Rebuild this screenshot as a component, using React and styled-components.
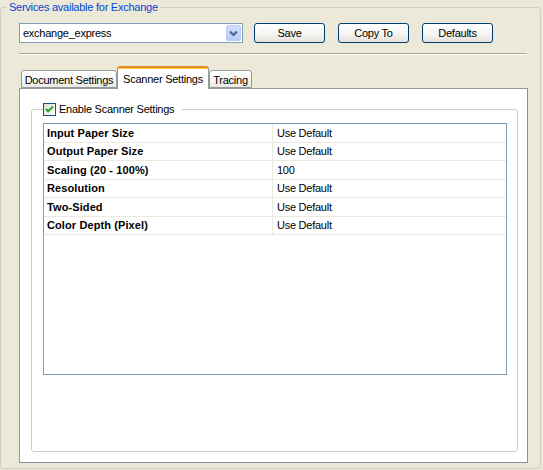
import { Fragment } from "react";
import styled, { createGlobalStyle } from "styled-components";

const GlobalStyle = createGlobalStyle`
	html, body {
		margin: 0;
		padding: 0;
		background: #ece9d8;
	}
	body {
		font-family: "Liberation Sans", Arial, sans-serif;
		font-size: 11px;
		letter-spacing: -0.25px;
		color: #000;
	}
`;

const Window = styled.div`
	width: 543px;
	height: 470px;
	overflow: hidden;
	background: #ece9d8;
`;

const GroupBox = styled.fieldset`
	box-sizing: border-box;
	margin: 0;
	width: 541px;
	height: 469px;
	padding: 9px 6px 0 6px;
	border: 1px solid #d0d0bf;
	border-radius: 3px;
`;

const GroupTitle = styled.legend`
	padding: 0 2px;
	line-height: 14px;
	color: #0046d5;
`;

const Body = styled.div`
	padding-left: 12px;
	display: flex;
	flex-direction: column;
`;

const Toolbar = styled.div`
	display: flex;
	align-items: center;
	height: 20px;
`;

const Combo = styled.div`
	box-sizing: border-box;
	width: 224px;
	height: 20px;
	border: 1px solid #7f9db9;
	background: #fff;
	display: flex;
	align-items: center;
	margin-right: 11px;
`;

const ComboText = styled.span`
	flex: 1;
	padding-left: 3px;
`;

const ComboArrow = styled.span`
	box-sizing: border-box;
	width: 15px;
	height: 16px;
	margin: 0 1px;
	border: 1px solid #bccdf5;
	border-radius: 2px;
	background: linear-gradient(#d2e0fd, #b7cbf7);
	display: flex;
	align-items: center;
	justify-content: center;
`;

const Button = styled.button`
	box-sizing: border-box;
	width: 71px;
	height: 20px;
	margin: 0 13px 0 0;
	padding: 0;
	border: 1px solid #003c74;
	border-radius: 3px;
	background: linear-gradient(#ffffff 0%, #f3f3ef 60%, #e3e1d8 100%);
	font: inherit;
	letter-spacing: inherit;
	color: #000;
`;

const Separator = styled.div`
	width: 508px;
	margin-top: 10px;
	border-top: 1px solid #aca899;
	border-bottom: 1px solid #fff;
`;

const TabStrip = styled.div`
	display: flex;
	align-items: flex-end;
	height: 22px;
	margin-top: 11px;
	padding-left: 2px;
`;

const Tab = styled.div`
	box-sizing: border-box;
	position: relative;
	width: ${(p) => p.$width}px;
	height: ${(p) => (p.$active ? "23px" : "18px")};
	margin-bottom: ${(p) => (p.$active ? "-1px" : "0")};
	z-index: ${(p) => (p.$active ? 1 : 0)};
	border: 1px solid #919b9c;
	border-bottom: ${(p) => (p.$active ? "none" : "1px solid #919b9c")};
	border-top: ${(p) => (p.$active ? "2px solid #e68b2c" : "1px solid #919b9c")};
	box-shadow: ${(p) => (p.$active ? "inset 0 1px 0 #ffc73c" : "none")};
	border-radius: 3px 3px 0 0;
	background: ${(p) => (p.$active ? "#fff" : "linear-gradient(#ffffff, #f3f3ef 70%, #e9e8e0)")};
	display: flex;
	align-items: center;
	justify-content: center;
	padding-top: ${(p) => (p.$active ? "0" : "1px")};
	white-space: nowrap;
`;

const Panel = styled.div`
	box-sizing: border-box;
	width: 509px;
	height: 375px;
	border: 1px solid #919b9c;
	border-right-color: #8a9191;
	border-bottom-color: #8a9191;
	background: #fff;
	padding: 13px 0 0 11px;
`;

const InnerGroup = styled.fieldset`
	box-sizing: border-box;
	margin: 0;
	width: 487px;
	padding: 7px 10px 76px 11px;
	border: 1px solid #d0d0bf;
	border-radius: 3px;
`;

const CheckLegend = styled.legend`
	padding: 0 8px 0 0;
	line-height: 14px;
	display: flex;
	align-items: center;
	gap: 3px;
`;

const Grid = styled.div`
	box-sizing: border-box;
	height: 252px;
	border: 1px solid #7f9db9;
	display: grid;
	grid-template-columns: 229px 1fr;
	grid-auto-rows: 18.5px;
	align-content: start;
`;

const Cell = styled.div`
	box-sizing: border-box;
	border-bottom: 1px solid #eceadf;
	border-right: ${(p) => (p.$label ? "1px solid #eceadf" : "none")};
	padding-left: ${(p) => (p.$label ? "3px" : "4px")};
	font-weight: ${(p) => (p.$label ? "bold" : "normal")};
	letter-spacing: ${(p) => (p.$label ? "0.1px" : "-0.25px")};
	display: flex;
	align-items: center;
	white-space: nowrap;
`;

const Checkbox = () => (
	<svg width="13" height="13" viewBox="0 0 13 13">
		<defs>
			<linearGradient id="cb" x1="0" y1="0" x2="1" y2="1">
				<stop offset="0" stopColor="#dcdcd7" />
				<stop offset="1" stopColor="#ffffff" />
			</linearGradient>
		</defs>
		<rect x="0.5" y="0.5" width="12" height="12" fill="url(#cb)" stroke="#1c5180" />
		<path d="M3 6 L5.2 8.3 L10 3.6" fill="none" stroke="#21a121" strokeWidth="2" />
	</svg>
);

const rows = [
	["Input Paper Size", "Use Default"],
	["Output Paper Size", "Use Default"],
	["Scaling (20 - 100%)", "100"],
	["Resolution", "Use Default"],
	["Two-Sided", "Use Default"],
	["Color Depth (Pixel)", "Use Default"],
];

export default function App() {
	return (
		<Window>
			<GlobalStyle />
			<GroupBox>
				<GroupTitle>Services available for Exchange</GroupTitle>
				<Body>
					<Toolbar>
						<Combo>
							<ComboText>exchange_express</ComboText>
							<ComboArrow>
								<svg width="9" height="7" viewBox="0 0 9 7">
									<path d="M1 1.5 L4.5 5 L8 1.5" fill="none" stroke="#4d6185" strokeWidth="2" />
								</svg>
							</ComboArrow>
						</Combo>
						<Button type="button">Save</Button>
						<Button type="button">Copy To</Button>
						<Button type="button">Defaults</Button>
					</Toolbar>
					<Separator />
					<TabStrip>
						<Tab $width={96}>Document Settings</Tab>
						<Tab $width={92} $active>
							Scanner Settings
						</Tab>
						<Tab $width={43}>Tracing</Tab>
					</TabStrip>
					<Panel>
						<InnerGroup>
							<CheckLegend>
								<Checkbox />
								Enable Scanner Settings
							</CheckLegend>
							<Grid>
								{rows.map(([label, value]) => (
									<Fragment key={label}>
										<Cell $label>{label}</Cell>
										<Cell>{value}</Cell>
									</Fragment>
								))}
							</Grid>
						</InnerGroup>
					</Panel>
				</Body>
			</GroupBox>
		</Window>
	);
}
